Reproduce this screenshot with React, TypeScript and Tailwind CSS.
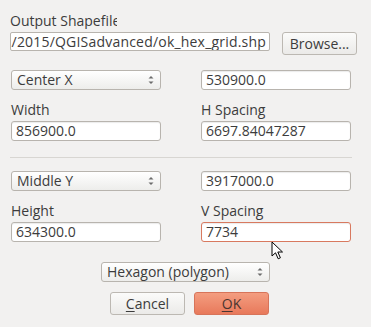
import React from 'react'

const font = { fontFamily: '"Open Sans", "DejaVu Sans", sans-serif' }

function TextBox({ value, error }: { value: string; error?: boolean }) {
  return (
    <div
      className={`h-[20px] w-[150px] rounded-[3px] border bg-white px-[4px] flex items-center overflow-hidden shadow-[inset_0_1px_1px_rgba(0,0,0,0.08)] ${
        error ? 'border-[#d8795f]' : 'border-[#b8b4ae]'
      }`}
    >
      <span className="text-[14px] leading-none text-[#3c3c3c] whitespace-nowrap">{value}</span>
    </div>
  )
}

function Combo({ value, className }: { value: string; className: string }) {
  return (
    <div
      className={`h-[20px] rounded-[3px] border border-[#b8b4ae] bg-gradient-to-b from-white to-[#ededeb] pl-[5px] pr-[6px] flex items-center justify-between ${className}`}
    >
      <span className="text-[14px] leading-none text-[#3c3c3c] whitespace-nowrap">{value}</span>
      <svg width="6" height="10" viewBox="0 0 6 10" className="text-[#6b6b6b]">
        <path d="M0.5 3.5 L3 1 L5.5 3.5 Z" fill="currentColor" />
        <path d="M0.5 6.5 L3 9 L5.5 6.5 Z" fill="currentColor" />
      </svg>
    </div>
  )
}

function Label({ text }: { text: string }) {
  return <div className="h-[17px] text-[14px] leading-[17px] text-[#3c3c3c]">{text}</div>
}

export default function App() {
  return (
    <div style={font} className="relative w-[371px] h-[327px] bg-[#f2f1f0] overflow-hidden select-none">
      <div className="pt-[12px] px-[10px]">
        {/* Output file */}
        <div className="w-[107px] overflow-hidden whitespace-nowrap">
          <Label text="Output Shapefile" />
        </div>
        <div className="mt-[3px] flex items-start">
          <div className="h-[19px] w-[260px] border border-[#b8b4ae] rounded-[2px] bg-white overflow-hidden flex justify-end items-center pr-[3px]">
            <span className="text-[14px] tracking-[0.2px] leading-none text-[#3c3c3c] whitespace-nowrap">
              /2015/QGISadvanced/ok_hex_grid.shp
            </span>
          </div>
          <button className="ml-[12px] h-[23px] w-[75px] rounded-[3px] border border-[#bcb8b2] bg-gradient-to-b from-[#fbfbfa] to-[#ebeae8] text-[14px] text-[#3c3c3c] leading-none">
            Browse...
          </button>
        </div>

        {/* X block */}
        <div className="mt-[15px] grid grid-cols-[150px_150px] gap-x-[40px] pl-[1px]">
          <Combo value="Center X" className="w-[150px]" />
          <TextBox value="530900.0" />
          <div className="mt-[11px]">
            <Label text="Width" />
          </div>
          <div className="mt-[11px]">
            <Label text="H Spacing" />
          </div>
          <div className="mt-[3px]">
            <TextBox value="856900.0" />
          </div>
          <div className="mt-[3px]">
            <TextBox value="6697.84047287" />
          </div>
        </div>

        <div className="mt-[16px] h-px w-[342px] bg-[#d8d6d2]" />

        {/* Y block */}
        <div className="mt-[13px] grid grid-cols-[150px_150px] gap-x-[40px] pl-[1px]">
          <Combo value="Middle Y" className="w-[150px]" />
          <TextBox value="3917000.0" />
          <div className="mt-[11px]">
            <Label text="Height" />
          </div>
          <div className="mt-[11px]">
            <Label text="V Spacing" />
          </div>
          <div className="mt-[3px]">
            <TextBox value="634300.0" />
          </div>
          <div className="mt-[3px]">
            <TextBox value="7734" error />
          </div>
        </div>

        {/* Grid type */}
        <div className="mt-[20px] flex justify-center">
          <Combo value="Hexagon (polygon)" className="w-[169px]" />
        </div>

        {/* Buttons */}
        <div className="mt-[10px] flex justify-center gap-[9px] pl-[8px]">
          <button className="h-[23px] w-[75px] rounded-[3px] border border-[#bcb8b2] bg-gradient-to-b from-[#fbfbfa] to-[#ebeae8] text-[14px] text-[#3c3c3c] leading-none">
            <span className="underline underline-offset-2">C</span>ancel
          </button>
          <button className="h-[23px] w-[75px] rounded-[3px] border border-[#d7745a] bg-gradient-to-b from-[#f39d80] to-[#e8795b] text-[14px] text-[#4a3530] leading-none">
            <span className="underline underline-offset-2">O</span>K
          </button>
        </div>
      </div>

      {/* mouse pointer */}
      <svg className="absolute left-[271px] top-[241px]" width="14" height="20" viewBox="0 0 14 20">
        <path
          d="M1 1 L1 15 L4.5 11.8 L7.2 17.8 L9.4 16.8 L6.8 11 L11.5 11 Z"
          fill="white"
          stroke="black"
          strokeWidth="1"
          strokeLinejoin="round"
        />
      </svg>
    </div>
  )
}
